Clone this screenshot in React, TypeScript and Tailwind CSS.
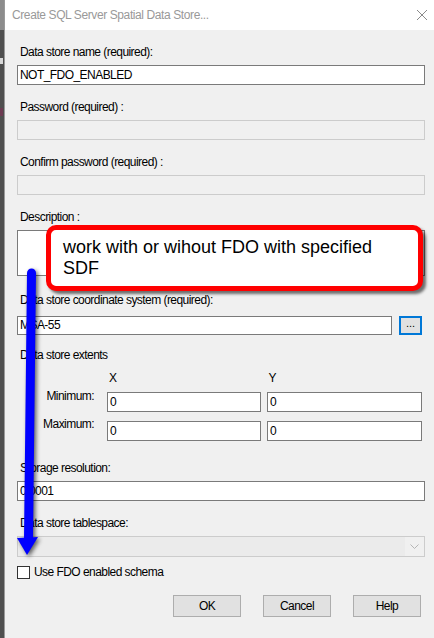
import * as React from "react"

const font = "font-['Liberation_Sans',Arial,sans-serif]"

function Label({ children, top }: { children: React.ReactNode; top: string }) {
  return <div className={`${top} h-[14px] pl-[3px] leading-[14px]`}>{children}</div>
}

function TextBox({ value, className = "" }: { value?: string; className?: string }) {
  return (
    <div
      className={`h-[20px] border border-[#7a7a7a] bg-white pl-[2px] leading-[18px] ${className}`}
    >
      {value}
    </div>
  )
}

function Disabled({ className = "" }: { className?: string }) {
  return <div className={`h-[20px] border border-[#cccccc] bg-[#f0f0f0] ${className}`} />
}

function Btn({ children }: { children: React.ReactNode }) {
  return (
    <div className="flex h-[22px] w-[68px] items-center justify-center border border-[#adadad] bg-[#e1e1e1]">
      {children}
    </div>
  )
}

export default function App() {
  return (
    <div className={`relative flex h-[638px] w-[434px] overflow-hidden ${font}`}>
      {/* strip of the window behind */}
      <div className="flex w-[4px] flex-col bg-[#4f4f4f]">
        <div className="h-[30px] bg-[#8c8c8c]" />
        <div className="mt-[28px] h-[6px] w-[3px] bg-[#d8d8d8]" />
        <div className="mt-[44px] h-[8px] w-[3px] bg-[#6d3b52]" />
      </div>

      <div className="flex flex-1 flex-col border-l border-[#9a9a9a]">
        {/* title bar */}
        <div className="flex h-[30px] items-center justify-between bg-white pl-[7px] pr-[5px]">
          <span className="text-[12px] tracking-[-0.4px] text-[#999999]">
            Create SQL Server Spatial Data Store...
          </span>
          <svg width="12" height="12" viewBox="0 0 12 12" className="mr-[1px]">
            <path d="M1 1 L11 11 M11 1 L1 11" stroke="#8a8a8a" strokeWidth="1" />
          </svg>
        </div>

        {/* body */}
        <div className="flex flex-1 flex-col bg-[#f0f0f0] pl-[12px] pr-[9px] text-[12px] tracking-[-0.55px] text-black">
          <Label top="mt-[15px]">Data store name (required):</Label>
          <TextBox value="NOT_FDO_ENABLED" className="mt-[6px]" />

          <Label top="mt-[15px]">Password (required) :</Label>
          <Disabled className="mt-[6px]" />

          <Label top="mt-[15px]">Confirm password (required) :</Label>
          <Disabled className="mt-[6px]" />

          <Label top="mt-[15px]">Description :</Label>
          <div className="mt-[6px] h-[46px] border border-[#7a7a7a] bg-white" />

          <Label top="mt-[17px]">Data store coordinate system (required):</Label>
          <div className="mt-[9px] flex items-center">
            <div className="h-[19px] w-[375px] border border-[#7a7a7a] bg-white pl-[2px] leading-[17px]">
              MSA-55
            </div>
            <div className="ml-[7px] flex h-[19px] w-[23px] items-center justify-center border-2 border-[#0078d7] bg-[#e1e1e1] pb-[4px] text-[11px] tracking-normal">
              ...
            </div>
          </div>

          <Label top="mt-[13px]">Data store extents</Label>
          <div className="mt-[9px] flex h-[14px] leading-[14px]">
            <span className="ml-[92px]">X</span>
            <span className="ml-[152px]">Y</span>
          </div>
          <div className="mt-[7px] flex">
            <div className="-mt-[3px] w-[77px] text-right leading-[14px]">Minimum:</div>
            <TextBox value="0" className="ml-[13px] w-[154px]" />
            <TextBox value="0" className="ml-[6px] w-[155px]" />
          </div>
          <div className="mt-[9px] flex">
            <div className="-mt-[4px] w-[77px] text-right leading-[14px]">Maximum:</div>
            <TextBox value="0" className="ml-[13px] w-[154px]" />
            <TextBox value="0" className="ml-[6px] w-[155px]" />
          </div>

          <Label top="mt-[20px]">Storage resolution:</Label>
          <TextBox value="0.0001" className="mt-[6px]" />

          <Label top="mt-[15px]">Data store tablespace:</Label>
          <div className="mt-[6px] flex h-[21px] border border-[#cccccc] bg-[#f0f0f0]">
            <div className="flex-1 bg-[#ebebeb]" />
            <div className="flex w-[19px] items-center justify-center">
              <svg width="9" height="5" viewBox="0 0 9 5">
                <path d="M0.5 0.5 L4.5 4.5 L8.5 0.5" fill="none" stroke="#b5b5b5" strokeWidth="1" />
              </svg>
            </div>
          </div>

          <div className="mt-[9px] flex items-center">
            <div className="h-[13px] w-[13px] border border-[#333333] bg-white" />
            <span className="ml-[4px] leading-[13px]">Use FDO enabled schema</span>
          </div>

          <div className="mt-[16px] flex justify-end gap-[22px] pr-[4px]">
            <Btn>OK</Btn>
            <Btn>Cancel</Btn>
            <Btn>Help</Btn>
          </div>
        </div>
      </div>

      {/* blue arrow annotation */}
      <svg
        className="pointer-events-none absolute left-0 top-0 drop-shadow-[2px_2px_2px_rgba(0,0,0,0.6)]"
        width="60"
        height="638"
        viewBox="0 0 60 638"
      >
        <path d="M31.5 273 L28.5 540" stroke="#0000ff" strokeWidth="9" strokeLinecap="round" />
        <polygon points="17,538 38,537 27,555" fill="#0000ff" />
      </svg>

      {/* red callout */}
      <div className="absolute left-[46px] top-[225px] h-[66px] w-[377px] rounded-[10px] border-[5px] border-[#ff0000] bg-white pl-[12px] pt-[7px] text-[18px] leading-[21px] text-black shadow-[3px_3px_3px_rgba(0,0,0,0.55)]">
        work with or wihout FDO with specified
        <br />
        SDF
      </div>
    </div>
  )
}
